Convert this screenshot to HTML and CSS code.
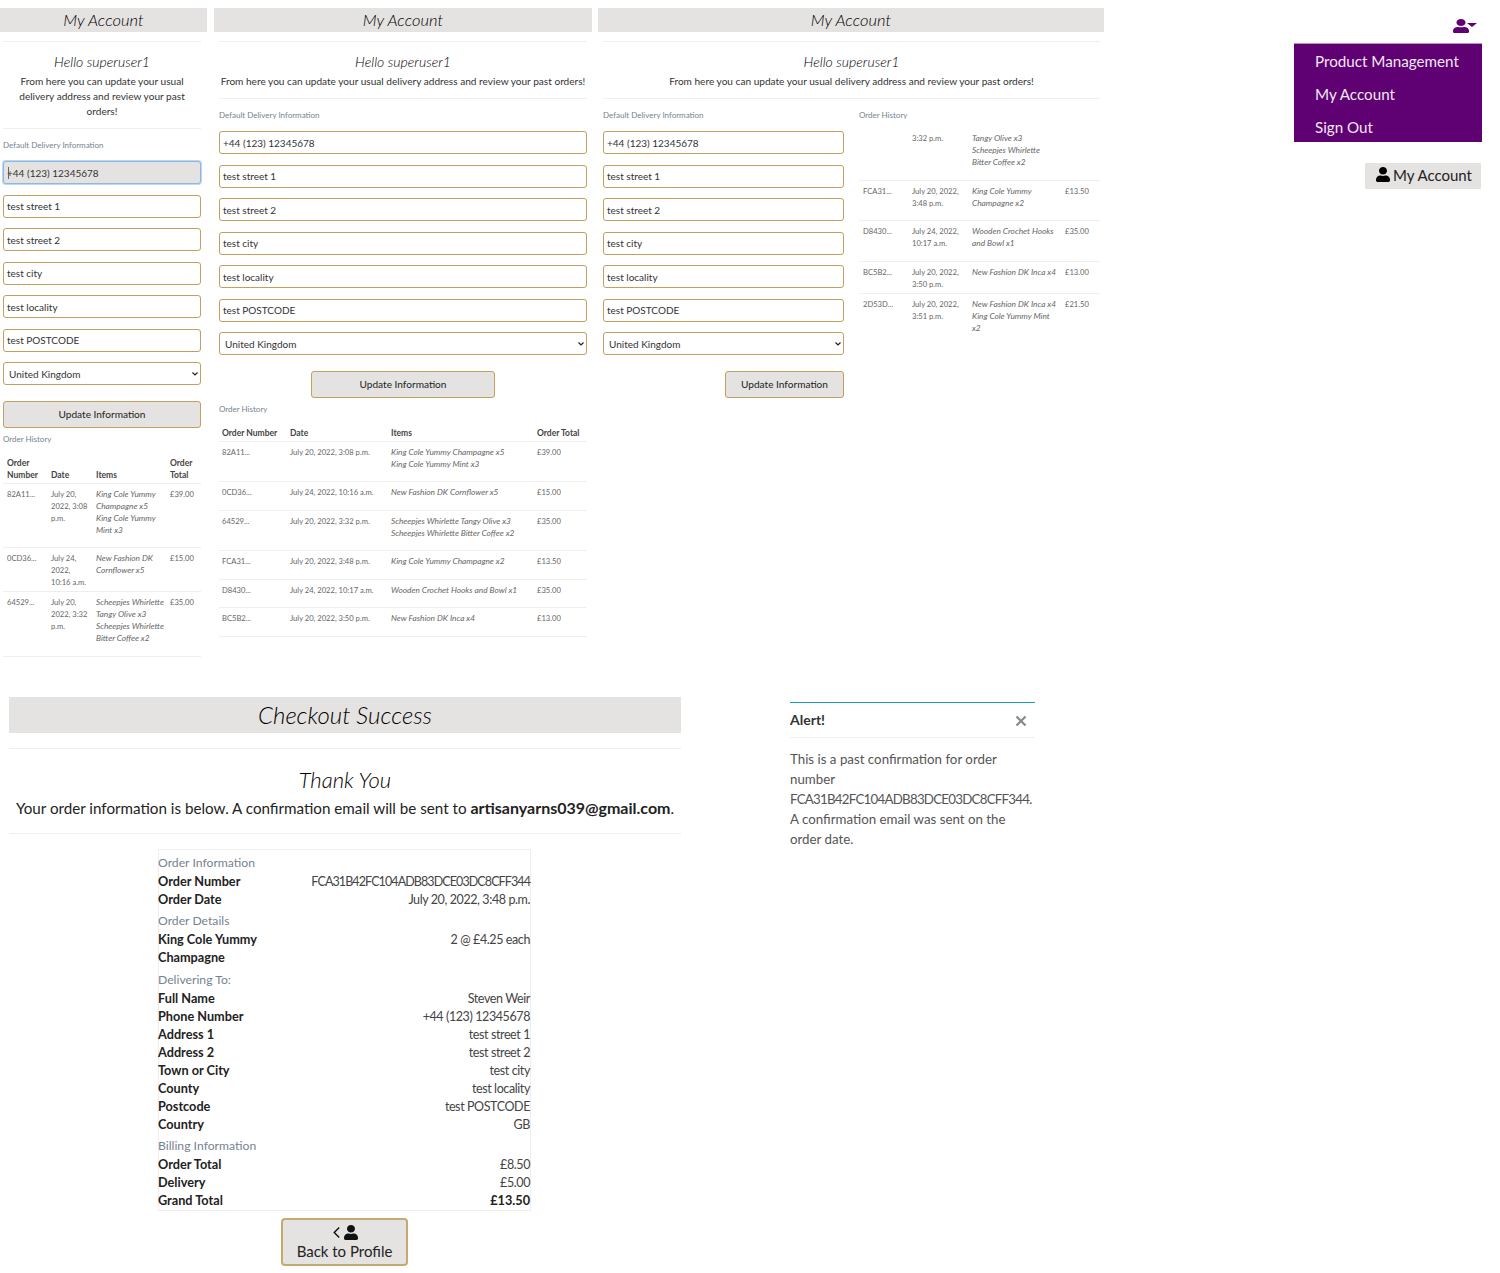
FILE: index.html
```html
<!DOCTYPE html>
<html lang="en">

<head>
    <meta charset="UTF-8">
    <title>Artisan Yarns</title>
    <link rel="stylesheet" href="styles.css">
</head>

<body>
    <svg class="defs" width="0" height="0">
        <symbol id="user" viewBox="0 0 448 512" preserveAspectRatio="none">
            <path d="M224 256c70.7 0 128-57.3 128-128S294.7 0 224 0 96 57.3 96 128s57.3 128 128 128zm89.6 32h-16.7c-22.2 10.2-46.9 16-72.9 16s-50.6-5.8-72.9-16h-16.7C60.2 288 0 348.2 0 422.4V464c0 26.5 21.5 48 48 48h352c26.5 0 48-21.5 48-48v-41.6c0-74.2-60.2-134.4-134.4-134.4z" />
        </symbol>
    </svg>

    <div class="top-row">
        <!-- narrow profile -->
        <section class="panel panel-sm">
            <h2 class="panel-title">My Account</h2>
            <div class="panel-body">
                <hr class="rule">
                <h3 class="hello">Hello superuser1</h3>
                <p class="intro">From here you can update your usual delivery address and review your past orders!</p>
                <hr class="rule">
                <p class="label">Default Delivery Information</p>
                <form class="form">
                    <input class="field field-focus" value="+44 (123) 12345678">
                    <input class="field" value="test street 1">
                    <input class="field" value="test street 2">
                    <input class="field" value="test city">
                    <input class="field" value="test locality">
                    <input class="field" value="test POSTCODE">
                    <select class="field field-select">
                        <option>United Kingdom</option>
                    </select>
                    <button class="btn btn-full" type="button">Update Information</button>
                </form>
                <p class="label label-history">Order History</p>
                <table class="orders orders-sm">
                    <thead>
                        <tr>
                            <th>Order Number</th>
                            <th>Date</th>
                            <th>Items</th>
                            <th>Order Total</th>
                        </tr>
                    </thead>
                    <tbody>
                        <tr>
                            <td>82A11...</td>
                            <td>July 20, 2022, 3:08 p.m.</td>
                            <td>
                                <p class="items">King Cole Yummy Champagne x5<br>King Cole Yummy Mint x3</p>
                            </td>
                            <td>£39.00</td>
                        </tr>
                        <tr>
                            <td>0CD36...</td>
                            <td>July 24, 2022, 10:16 a.m.</td>
                            <td>
                                <p class="items">New Fashion DK Cornflower x5</p>
                            </td>
                            <td>£15.00</td>
                        </tr>
                        <tr>
                            <td>64529...</td>
                            <td>July 20, 2022, 3:32 p.m.</td>
                            <td>
                                <p class="items">Scheepjes Whirlette Tangy Olive x3<br>Scheepjes Whirlette Bitter Coffee x2</p>
                            </td>
                            <td>£35.00</td>
                        </tr>
                    </tbody>
                </table>
            </div>
        </section>

        <!-- medium profile -->
        <section class="panel panel-md">
            <h2 class="panel-title">My Account</h2>
            <div class="panel-body">
                <hr class="rule">
                <h3 class="hello">Hello superuser1</h3>
                <p class="intro">From here you can update your usual delivery address and review your past orders!</p>
                <hr class="rule">
                <p class="label">Default Delivery Information</p>
                <form class="form">
                    <input class="field" value="+44 (123) 12345678">
                    <input class="field" value="test street 1">
                    <input class="field" value="test street 2">
                    <input class="field" value="test city">
                    <input class="field" value="test locality">
                    <input class="field" value="test POSTCODE">
                    <select class="field field-select">
                        <option>United Kingdom</option>
                    </select>
                    <button class="btn btn-center" type="button">Update Information</button>
                </form>
                <p class="label label-history">Order History</p>
                <table class="orders orders-md">
                    <thead>
                        <tr>
                            <th>Order Number</th>
                            <th>Date</th>
                            <th>Items</th>
                            <th>Order Total</th>
                        </tr>
                    </thead>
                    <tbody>
                        <tr>
                            <td>82A11...</td>
                            <td>July 20, 2022, 3:08 p.m.</td>
                            <td>
                                <p class="items">King Cole Yummy Champagne x5<br>King Cole Yummy Mint x3</p>
                            </td>
                            <td>£39.00</td>
                        </tr>
                        <tr>
                            <td>0CD36...</td>
                            <td>July 24, 2022, 10:16 a.m.</td>
                            <td>
                                <p class="items">New Fashion DK Cornflower x5</p>
                            </td>
                            <td>£15.00</td>
                        </tr>
                        <tr>
                            <td>64529...</td>
                            <td>July 20, 2022, 3:32 p.m.</td>
                            <td>
                                <p class="items">Scheepjes Whirlette Tangy Olive x3<br>Scheepjes Whirlette Bitter Coffee x2</p>
                            </td>
                            <td>£35.00</td>
                        </tr>
                        <tr>
                            <td>FCA31...</td>
                            <td>July 20, 2022, 3:48 p.m.</td>
                            <td>
                                <p class="items">King Cole Yummy Champagne x2</p>
                            </td>
                            <td>£13.50</td>
                        </tr>
                        <tr>
                            <td>D8430...</td>
                            <td>July 24, 2022, 10:17 a.m.</td>
                            <td>
                                <p class="items">Wooden Crochet Hooks and Bowl x1</p>
                            </td>
                            <td>£35.00</td>
                        </tr>
                        <tr>
                            <td>BC5B2...</td>
                            <td>July 20, 2022, 3:50 p.m.</td>
                            <td>
                                <p class="items">New Fashion DK Inca x4</p>
                            </td>
                            <td>£13.00</td>
                        </tr>
                    </tbody>
                </table>
            </div>
        </section>

        <!-- wide profile, order table is scrolled -->
        <section class="panel panel-lg">
            <h2 class="panel-title">My Account</h2>
            <div class="panel-body">
                <hr class="rule">
                <h3 class="hello">Hello superuser1</h3>
                <p class="intro">From here you can update your usual delivery address and review your past orders!</p>
                <hr class="rule">
                <div class="two-col">
                    <div>
                        <p class="label">Default Delivery Information</p>
                        <form class="form">
                            <input class="field" value="+44 (123) 12345678">
                            <input class="field" value="test street 1">
                            <input class="field" value="test street 2">
                            <input class="field" value="test city">
                            <input class="field" value="test locality">
                            <input class="field" value="test POSTCODE">
                            <select class="field field-select">
                                <option>United Kingdom</option>
                            </select>
                            <button class="btn btn-right" type="button">Update Information</button>
                        </form>
                    </div>
                    <div>
                        <p class="label">Order History</p>
                        <table class="orders orders-lg">
                            <tbody>
                                <tr>
                                    <td></td>
                                    <td>3:32 p.m.</td>
                                    <td>
                                        <p class="items">Tangy Olive x3<br>Scheepjes Whirlette Bitter Coffee x2</p>
                                    </td>
                                    <td></td>
                                </tr>
                                <tr>
                                    <td>FCA31...</td>
                                    <td>July 20, 2022, 3:48 p.m.</td>
                                    <td>
                                        <p class="items">King Cole Yummy Champagne x2</p>
                                    </td>
                                    <td>£13.50</td>
                                </tr>
                                <tr>
                                    <td>D8430...</td>
                                    <td>July 24, 2022, 10:17 a.m.</td>
                                    <td>
                                        <p class="items">Wooden Crochet Hooks and Bowl x1</p>
                                    </td>
                                    <td>£35.00</td>
                                </tr>
                                <tr>
                                    <td>BC5B2...</td>
                                    <td>July 20, 2022, 3:50 p.m.</td>
                                    <td>
                                        <p class="items">New Fashion DK Inca x4</p>
                                    </td>
                                    <td>£13.00</td>
                                </tr>
                                <tr class="no-line">
                                    <td>2D53D...</td>
                                    <td>July 20, 2022, 3:51 p.m.</td>
                                    <td>
                                        <p class="items">New Fashion DK Inca x4<br>King Cole Yummy Mint x2</p>
                                    </td>
                                    <td>£21.50</td>
                                </tr>
                            </tbody>
                        </table>
                    </div>
                </div>
            </div>
        </section>

        <!-- nav dropdown -->
        <aside class="side">
            <div class="nav-toggle">
                <svg class="nav-user">
                    <use href="#user" />
                </svg>
                <span class="nav-caret"></span>
            </div>
            <ul class="nav-menu">
                <li>Product Management</li>
                <li>My Account</li>
                <li>Sign Out</li>
            </ul>
            <div class="account-wrap">
                <div class="account-btn">
                    <svg class="account-icon">
                        <use href="#user" />
                    </svg>
                    <span class="account-text">My Account</span>
                </div>
            </div>
        </aside>
    </div>

    <div class="bottom-row">
        <section class="checkout">
            <h2 class="checkout-title">Checkout Success</h2>
            <hr class="rule rule-first">
            <h3 class="thanks">Thank You</h3>
            <p class="thanks-text">Your order information is below. A confirmation email will be sent to <strong>artisanyarns039@gmail.com</strong>.</p>
            <hr class="rule">
            <div class="receipt">
                <p class="receipt-head">Order Information</p>
                <div class="receipt-row"><b>Order Number</b><span class="hash">FCA31B42FC104ADB83DCE03DC8CFF344</span></div>
                <div class="receipt-row"><b>Order Date</b><span>July 20, 2022, 3:48 p.m.</span></div>
                <p class="receipt-head">Order Details</p>
                <div class="receipt-row"><b class="wrap">King Cole Yummy Champagne</b><span>2 @ £4.25 each</span></div>
                <p class="receipt-head">Delivering To:</p>
                <div class="receipt-row"><b>Full Name</b><span>Steven Weir</span></div>
                <div class="receipt-row"><b>Phone Number</b><span>+44 (123) 12345678</span></div>
                <div class="receipt-row"><b>Address 1</b><span>test street 1</span></div>
                <div class="receipt-row"><b>Address 2</b><span>test street 2</span></div>
                <div class="receipt-row"><b>Town or City</b><span>test city</span></div>
                <div class="receipt-row"><b>County</b><span>test locality</span></div>
                <div class="receipt-row"><b>Postcode</b><span>test POSTCODE</span></div>
                <div class="receipt-row"><b>Country</b><span>GB</span></div>
                <p class="receipt-head">Billing Information</p>
                <div class="receipt-row"><b>Order Total</b><span>£8.50</span></div>
                <div class="receipt-row"><b>Delivery</b><span>£5.00</span></div>
                <div class="receipt-row"><b>Grand Total</b><b>£13.50</b></div>
            </div>
            <button class="back-btn" type="button">
                <span class="back-icons">
                    <svg class="back-chevron" viewBox="0 0 10 14">
                        <path d="M8 1.5 2.5 7 8 12.5" />
                    </svg>
                    <svg class="back-user">
                        <use href="#user" />
                    </svg>
                </span>
                Back to Profile
            </button>
        </section>

        <section class="alert">
            <div class="alert-head">
                <strong>Alert!</strong>
                <svg class="alert-close" viewBox="0 0 12 12">
                    <path d="M1.5 1.5 10.5 10.5M10.5 1.5 1.5 10.5" />
                </svg>
            </div>
            <p class="alert-text">This is a past confirmation for order number <span class="alert-hash">FCA31B42FC104ADB83DCE03DC8CFF344.</span> A confirmation email was sent on the order date.</p>
        </section>
    </div>
</body>

</html>
```

FILE: styles.css
```css
* {
    box-sizing: border-box;
}

body {
    margin: 0px;
    padding-top: 8px;
    background: #FFF;
    color: #333;
    font-family: "Lato", sans-serif;
}

p,
h2,
h3,
ul {
    margin: 0px;
    padding: 0px;
}

.defs {
    display: block;
    height: 0px;
}

.top-row {
    display: flex;
    align-items: flex-start;
    height: 689px;
}

.panel-sm {
    width: 207px;
    margin-right: 7px;
}

.panel-md {
    width: 378px;
    margin-right: 6px;
}

.panel-lg {
    width: 506px;
}

.panel-title {
    height: 24px;
    line-height: 24px;
    background: #E5E3E1;
    color: #000;
    font-size: 16.5px;
    font-style: italic;
    font-weight: 300;
    text-align: center;
}

.panel-sm .panel-body {
    padding: 0px 6px 0px 3px;
}

.panel-md .panel-body {
    padding: 0px 5px;
}

.panel-lg .panel-body {
    padding: 0px 4px 0px 5px;
}

.rule {
    height: 1px;
    margin: 0px;
    border: 0px;
    background: #EEE;
}

.panel-body>.rule:first-child {
    margin-top: 9px;
}

.hello {
    margin-top: 10px;
    line-height: 20px;
    color: #000;
    font-size: 14px;
    font-style: italic;
    font-weight: 300;
    text-align: center;
}

.intro {
    margin: 2px 0px 9px;
    font-size: 10.1px;
    line-height: 15px;
    text-align: center;
}

.label {
    margin: 10px 0px;
    font-size: 8px;
    line-height: 12px;
    color: #76838F;
}

.label-history {
    margin: 5px 0px 8px;
}

.form {
    display: flex;
    flex-direction: column;
    gap: 10.5px;
}

.field {
    display: block;
    width: 100%;
    height: 23px;
    padding: 0px 3px;
    border: 1px solid #C49F5E;
    border-radius: 3px;
    background: #FFF;
    color: #333;
    font-family: "Lato", sans-serif;
    font-size: 10px;
}

.field-focus {
    border-color: #8CB8E8;
    background: linear-gradient(#666, #666) 4px center / 1px 12px no-repeat #E5E3E1;
    box-shadow: 0 0 0 1px #BBD7F5;
}

.field-select {
    padding-left: 5px;
    appearance: none;
    background: url("data:image/svg+xml,%3Csvg xmlns='http://www.w3.org/2000/svg' viewBox='0 0 6 4'%3E%3Cpath d='M.5.5 3 3 5.5.5' fill='none' stroke='%23222' stroke-width='1.2'/%3E%3C/svg%3E") right 2px center / 6px 4px no-repeat #FFF;
}

.btn {
    height: 27px;
    margin-top: 5px;
    border: 1px solid #C49F5E;
    border-radius: 3px;
    background: #E5E3E1;
    color: #222;
    font-family: "Lato", sans-serif;
    font-size: 10.1px;
}

.btn-center {
    width: 184px;
    align-self: center;
}

.btn-right {
    width: 119px;
    align-self: flex-end;
}

.orders {
    width: 100%;
    table-layout: fixed;
    border-collapse: collapse;
    font-size: 7.6px;
    line-height: 12px;
    color: #666;
}

.orders th {
    padding: 4px 2px 2px 4px;
    border-bottom: 1px solid #EEE;
    color: #444;
    font-size: 8.5px;
    text-align: left;
    vertical-align: bottom;
}

.orders td {
    padding: 4px 2px 3px 4px;
    border-bottom: 1px solid #EEE;
    vertical-align: top;
}

.orders .no-line td {
    border-bottom: 0px;
}

.items {
    margin-bottom: 8.6px;
    font-size: 8.3px;
    font-style: italic;
}

.orders-sm th:nth-child(1) {
    width: 44px;
}

.orders-sm th:nth-child(2) {
    width: 45px;
}

.orders-sm th:nth-child(3) {
    width: 74px;
}

.orders-md th:nth-child(1) {
    width: 67px;
}

.orders-md th:nth-child(2) {
    width: 101px;
}

.orders-md th:nth-child(3) {
    width: 146px;
}

.orders-md th:first-child,
.orders-md td:first-child {
    padding-left: 3px;
}

.orders-lg td:nth-child(1) {
    width: 49px;
}

.orders-lg td:nth-child(2) {
    width: 60px;
}

.orders-lg td:nth-child(3) {
    width: 93px;
}

.orders-lg {
    margin-top: -3px;
}

.two-col {
    display: grid;
    grid-template-columns: 241px 241px;
    gap: 15px;
}

.side {
    width: 188px;
    margin-left: 190px;
}

.nav-toggle {
    display: flex;
    justify-content: flex-end;
    align-items: center;
    height: 35px;
    padding: 1px 5px 0px 0px;
}

.nav-user {
    width: 16px;
    height: 14px;
    fill: #5F0073;
}

.nav-caret {
    width: 0px;
    height: 0px;
    margin: 0px 0px 2px -2px;
    border-top: 4px solid #5F0073;
    border-left: 5px solid transparent;
    border-right: 5px solid transparent;
}

.nav-menu {
    height: 99px;
    border-top: 1px solid #B98FC4;
    background: #5F0073;
    color: #F2E9F4;
    font-size: 15.2px;
    list-style: none;
}

.nav-menu li {
    height: 33px;
    padding: 1px 0px 0px 21px;
    line-height: 33px;
}

.account-wrap {
    display: flex;
    justify-content: flex-end;
    margin-top: 21px;
    padding-right: 1px;
}

.account-btn {
    display: flex;
    align-items: center;
    gap: 3px;
    width: 116px;
    height: 26px;
    padding-left: 11px;
    background: #E5E3E1;
    color: #222;
    font-size: 15px;
}

.account-text {
    padding-bottom: 2px;
}

.account-icon {
    width: 14px;
    height: 15px;
    margin-bottom: 3px;
    fill: #000;
}

.bottom-row {
    display: flex;
    align-items: flex-start;
    padding-left: 9px;
}

.checkout {
    width: 672px;
    text-align: center;
}

.checkout-title {
    height: 36px;
    line-height: 36px;
    background: #E5E3E1;
    color: #000;
    font-size: 24px;
    font-style: italic;
    font-weight: 300;
}

.rule-first {
    margin-top: 15px;
}

.thanks {
    margin-top: 16px;
    line-height: 30px;
    color: #000;
    font-size: 22px;
    font-style: italic;
    font-weight: 300;
}

.thanks-text {
    margin: 1px 0px 13px;
    font-size: 15.2px;
    line-height: 24px;
    color: #222;
}

.thanks-text strong {
    font-size: 16px;
}

.receipt {
    width: 373px;
    margin: 15px auto 0px 149px;
    padding-bottom: 1px;
    border: 1px solid #EEE;
    font-size: 12.5px;
    line-height: 18px;
    letter-spacing: -0.4px;
    color: #444;
    text-align: left;
}

.receipt-head {
    margin: 4.4px 0px 0px -1px;
    font-size: 12.2px;
    letter-spacing: 0px;
    line-height: 18px;
    color: #76838F;
}

.receipt-head:first-child {
    margin-top: 4px;
}

.receipt-row {
    display: flex;
    justify-content: space-between;
    margin-left: -1px;
}

.receipt-row span {
    padding-top: 1px;
    margin-bottom: -1px;
}

.receipt-row b {
    color: #222;
    font-size: 12.7px;
    letter-spacing: 0px;
}

.receipt-row .wrap {
    width: 110px;
}

.hash {
    letter-spacing: -0.9px;
}

.back-btn {
    display: block;
    width: 127px;
    height: 48px;
    margin: 7px 0px 0px 272px;
    padding: 0px;
    border: 2px solid #C9A86F;
    border-radius: 4px;
    background: #E5E3E1;
    color: #222;
    font-family: "Lato", sans-serif;
    font-size: 15px;
    line-height: 20px;
}

.back-icons {
    display: flex;
    justify-content: center;
    align-items: center;
    gap: 3px;
    height: 18px;
}

.back-chevron {
    width: 9px;
    height: 13px;
    fill: none;
    stroke: #111;
    stroke-width: 1.6;
}

.back-user {
    width: 14px;
    height: 15px;
    fill: #111;
}

.alert {
    width: 245px;
    margin: 5px 0px 0px 109px;
    border-top: 1px solid #17A2B8;
    color: #555;
    font-size: 13.3px;
    line-height: 20px;
}

.alert-head {
    display: flex;
    justify-content: space-between;
    align-items: center;
    height: 35px;
    padding-right: 8px;
    border-bottom: 1px solid #EEE;
    color: #333;
    font-size: 14px;
}

.alert-close {
    width: 12px;
    height: 12px;
    margin-top: 2px;
    fill: none;
    stroke: #888;
    stroke-width: 2.2;
}

.alert-text {
    margin-top: 11px;
}

.alert-hash {
    letter-spacing: -0.75px;
}
```
